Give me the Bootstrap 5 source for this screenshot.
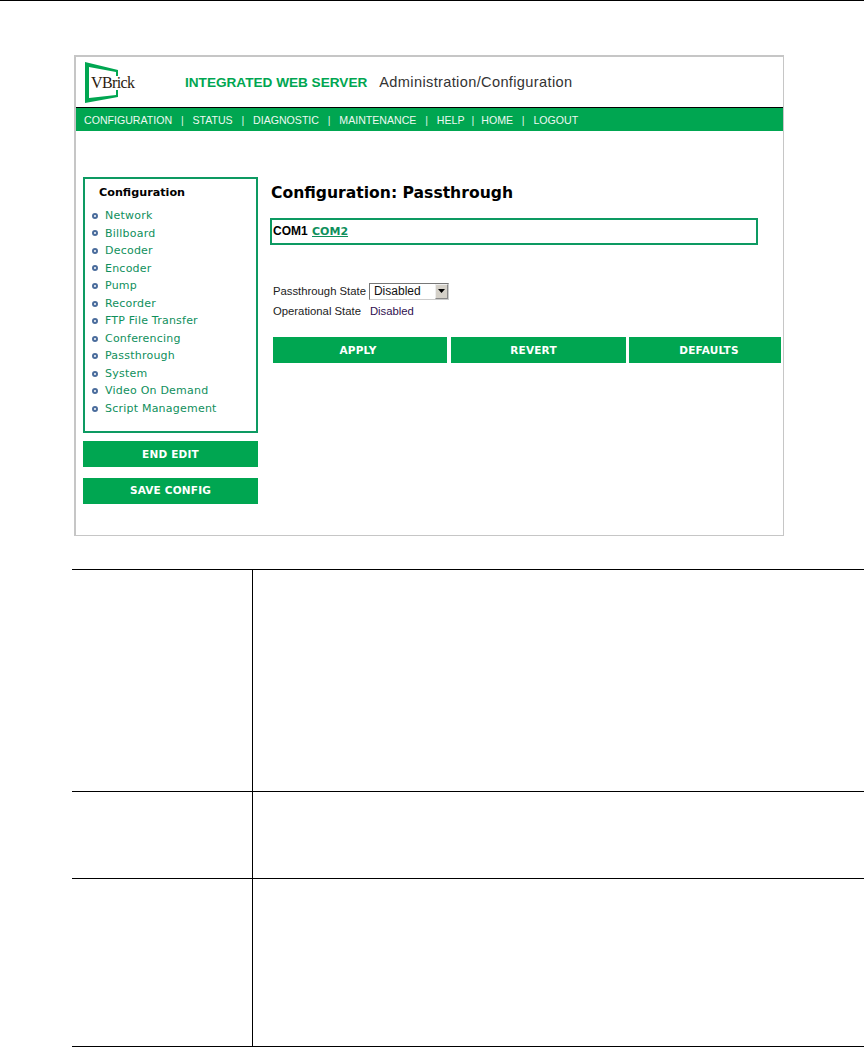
<!DOCTYPE html>
<html lang="en">
<head>
    <meta charset="UTF-8">
    <title>Configuration: Passthrough</title>
    <link href="https://cdn.jsdelivr.net/npm/bootstrap@5.3.0/dist/css/bootstrap.min.css" rel="stylesheet">
    <style>
        html, body { height: 1047px; overflow: hidden; }
        body { background: #fff; border-top: 1px solid #000; padding-top: 54px; font-family: "Liberation Sans", Arial, sans-serif; }

        .shot { width: 710px; height: 481px; margin-left: 74px; border: 2px solid #c6c6c6; border-right-width: 1px; border-bottom-width: 1px; }
        .shot-head { height: 50px; padding-left: 8px; }
        .head-title { margin-left: 45px; padding-top: 15px; font-size: 13.6px; font-weight: 700; color: #00a651; white-space: nowrap; }
        .head-sub { margin-left: 12px; font-size: 14.6px; letter-spacing: .35px; font-weight: 400; color: #333; }

        .shot-nav { height: 24px; background: #00a651; border-top: 1px solid #000; padding-left: 8px; color: #dff3e6; font-size: 10.6px; line-height: 24px; white-space: nowrap; }
        .shot-nav a { color: #eef8f1; text-decoration: none; }
        .shot-nav span { margin: 0 8.8px; }
        .shot-nav span.nav-tight { margin: 0 7px; }

        .shot-body { padding: 46px 0 0 7px; }
        .side-col { width: 175px; }
        .side-box { height: 256px; border: 2px solid #0d9a62; padding: 5px 0 0 7px; margin-bottom: 8px; }
        .side-title { margin: 0 0 6px 7px; font: 700 11.2px/17px "DejaVu Sans", Verdana, sans-serif; color: #000; }
        .side-list { margin: 0; padding: 0; list-style: none; font: 11px/17.55px "DejaVu Sans", Verdana, sans-serif; letter-spacing: .22px; }
        .side-list a { color: #0f8f5c; text-decoration: none; }
        .side-list li { display: flex; align-items: center; gap: 7px; }
        .side-list i { width: 6px; height: 6px; border-radius: 50%; border: 2px solid #4a6c9c; background: #fff; }

        .act-btn { display: block; border: 0; border-radius: 0; background: #00a651; color: #fff; height: 26px; padding: 0; font: 700 10.5px "DejaVu Sans", Verdana, sans-serif; letter-spacing: .2px; }
        .side-col .act-btn { width: 175px; margin-bottom: 11px; }
        .side-col .act-btn:last-child { padding-bottom: 2px; }

        .main-col { padding-left: 12px; }
        .main-title { margin: 6px 0 15px 1px; font: 700 15.6px/20px "DejaVu Sans", Verdana, sans-serif; color: #000; }
        .com-box { width: 488px; height: 27px; border: 2px solid #0d9a62; padding-left: 1px; font-size: 12px; font-weight: 700; line-height: 23px; color: #000; }
        .com-box a { color: #0f8f5c; margin-left: 1px; font-family: "DejaVu Sans", Verdana, sans-serif; font-size: 11px; }
        .form-row-x { margin-left: 3px; font-size: 11.3px; color: #222; }
        .row-a { margin-top: 36px; height: 20px; }
        .row-b { margin-top: 0; height: 20px; }
        .row-lbl { margin-right: 3px; }
        .row-val { margin-left: 9px; color: #301050; }
        .sel-wrap { position: relative; width: 80px; height: 17px; }
        .sel-box { width: 100%; height: 100%; appearance: none; border: 1px solid #777; border-right-color: #ccc; border-bottom-color: #ccc; border-radius: 0; background: #fff; padding: 0 0 0 4px; font-size: 12px; line-height: 15px; color: #111; }
        .sel-arrow { position: absolute; right: 1px; top: 1px; width: 13px; height: 15px; background: #d4d0c8; border: 1px solid #888; border-top-color: #eee; border-left-color: #eee; display: flex; align-items: center; justify-content: center; pointer-events: none; }
        .btn-row { margin: 16px 0 0 3px; gap: 4px; }
        .btn-row .act-btn:nth-child(1) { width: 174px; padding-right: 4px; }
        .btn-row .act-btn:nth-child(2) { width: 175px; padding-right: 10px; }
        .btn-row .act-btn:nth-child(3) { width: 152px; margin-left: -1px; padding-left: 8px; }

        .spec-grid { margin: 33px 0 0 72px; width: 792px; border-collapse: collapse; table-layout: fixed; }
        .spec-grid td { border-top: 1px solid #000; border-bottom: 1px solid #000; padding: 0; }
        .spec-grid td:first-child { width: 180px; border-right: 1px solid #000; }
    </style>
</head>
<body>
<div class="shot">
    <div class="shot-head d-flex">
        <svg width="56" height="48" viewBox="0 0 56 48" class="flex-shrink-0" aria-label="VBrick logo">
            <path d="M1 5 L34 13 V40 L1 46 Z M5 10 V41 L32 38 V15 Z" fill="#00a651" fill-rule="evenodd"/>
            <rect x="28" y="19" width="28" height="14" fill="#fff"/>
            <text x="7" y="31" font-family="Liberation Serif, serif" font-size="16" letter-spacing="-.6" fill="#2a1a10">VBrick</text>
        </svg>
        <div class="head-title">INTEGRATED WEB SERVER<span class="head-sub">Administration/Configuration</span></div>
    </div>
    <div class="shot-nav">
        <a href="#">CONFIGURATION</a><span>|</span><a href="#">STATUS</a><span>|</span><a href="#">DIAGNOSTIC</a><span>|</span><a href="#">MAINTENANCE</a><span>|</span><a href="#">HELP</a><span class="nav-tight">|</span><a href="#">HOME</a><span>|</span><a href="#">LOGOUT</a>
    </div>
    <div class="shot-body d-flex">
        <div class="side-col flex-shrink-0">
            <div class="side-box">
                <div class="side-title">Configuration</div>
                <ul class="side-list">
                    <li><i></i><a href="#">Network</a></li>
                    <li><i></i><a href="#">Billboard</a></li>
                    <li><i></i><a href="#">Decoder</a></li>
                    <li><i></i><a href="#">Encoder</a></li>
                    <li><i></i><a href="#">Pump</a></li>
                    <li><i></i><a href="#">Recorder</a></li>
                    <li><i></i><a href="#">FTP File Transfer</a></li>
                    <li><i></i><a href="#">Conferencing</a></li>
                    <li><i></i><a href="#">Passthrough</a></li>
                    <li><i></i><a href="#">System</a></li>
                    <li><i></i><a href="#">Video On Demand</a></li>
                    <li><i></i><a href="#">Script Management</a></li>
                </ul>
            </div>
            <button class="act-btn" type="button">END EDIT</button>
            <button class="act-btn" type="button">SAVE CONFIG</button>
        </div>
        <div class="main-col">
            <h1 class="main-title">Configuration: Passthrough</h1>
            <div class="com-box">COM1 <a href="#">COM2</a></div>
            <div class="form-row-x row-a d-flex align-items-center">
                <span class="row-lbl">Passthrough State</span>
                <div class="sel-wrap">
                    <select class="sel-box"><option>Disabled</option><option>Enabled</option></select>
                    <div class="sel-arrow"><svg width="7" height="4" viewBox="0 0 7 4"><path d="M0 0H7L3.5 4Z" fill="#000"/></svg></div>
                </div>
            </div>
            <div class="form-row-x row-b d-flex align-items-center">
                <span>Operational State</span><span class="row-val">Disabled</span>
            </div>
            <div class="btn-row d-flex">
                <button class="act-btn" type="button">APPLY</button>
                <button class="act-btn" type="button">REVERT</button>
                <button class="act-btn" type="button">DEFAULTS</button>
            </div>
        </div>
    </div>
</div>
<table class="spec-grid">
    <tr style="height: 222px"><td></td><td></td></tr>
    <tr style="height: 87px"><td></td><td></td></tr>
    <tr style="height: 168px"><td></td><td></td></tr>
</table>
</body>
</html>
